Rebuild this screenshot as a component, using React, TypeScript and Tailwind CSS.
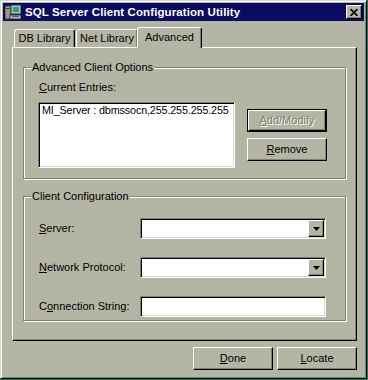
const raised =
  "border border-t-white border-l-white border-r-black border-b-black shadow-[inset_-1px_-1px_0_#808074]"
const sunken =
  "border border-t-[#808074] border-l-[#808074] border-r-white border-b-white shadow-[inset_1px_1px_0_#000,inset_-1px_-1px_0_#d8d8cc]"

const U = ({ children }: { children: string }) => <span className="underline underline-offset-[1px]">{children}</span>

const ArrowDown = () => (
  <svg width="7" height="4" viewBox="0 0 7 4">
    <polygon points="0,0 7,0 3.5,4" fill="#000" />
  </svg>
)

const Combo = () => (
  <div className={`${sunken} bg-white w-[186px] h-[21px] p-[1px] flex justify-end`}>
    <div className={`${raised} bg-[#b5b5a6] w-[16px] h-[17px] flex items-center justify-center`}>
      <ArrowDown />
    </div>
  </div>
)

const GroupBox = ({ title, className, children }: { title: string; className: string; children: any }) => (
  <div className={`relative border border-[#808074] shadow-[inset_1px_1px_0_#fff,1px_1px_0_#fff] ${className}`}>
    <span className="absolute -top-[7px] left-[7px] px-[1px] bg-[#b5b5a6]">{title}</span>
    {children}
  </div>
)

export default function App() {
  return (
    <div className="w-[368px] h-[380px] bg-[#0e7a6c] font-['Liberation_Sans',Arial,sans-serif] text-[11px] leading-[13px] text-black">
      <div className="w-[367px] h-[379px] bg-[#b5b5a6] border border-t-[#d8d8cc] border-l-[#d8d8cc] border-r-black border-b-black shadow-[inset_1px_1px_0_#fff,inset_-1px_-1px_0_#808074] p-[2px] flex flex-col">
        {/* title bar */}
        <div className="h-[18px] bg-[#0a0a60] flex items-center px-[2px]">
          <svg width="16" height="16" viewBox="0 0 16 16">
            <rect x="0" y="2" width="6" height="13" fill="#9a9a8c" stroke="#404040" strokeWidth="1" />
            <rect x="1" y="4" width="4" height="1" fill="#404040" />
            <rect x="6" y="1" width="10" height="9" fill="#c0c0b4" stroke="#303030" strokeWidth="1" />
            <rect x="8" y="3" width="6" height="5" fill="#18a890" />
            <rect x="5" y="11" width="11" height="4" fill="#c0c0b4" stroke="#303030" strokeWidth="1" />
            <rect x="7" y="12" width="7" height="1" fill="#5050a0" />
          </svg>
          <span className="ml-[4px] text-white font-bold text-[11.5px] tracking-[0.1px]">SQL Server Client Configuration Utility</span>
          <div className={`ml-auto ${raised} bg-[#b5b5a6] w-[16px] h-[14px] flex items-center justify-center`}>
            <svg width="8" height="7" viewBox="0 0 8 7">
              <path d="M0.5 0 L7.5 7 M7.5 0 L0.5 7" stroke="#000" strokeWidth="1.7" />
            </svg>
          </div>
        </div>

        <div className="pl-[9px] pt-[6px]">
          {/* tabs */}
          <div className="flex items-end h-[20px] pl-[2px]">
            <div className="w-[61px] h-[18px] border-t border-l border-white border-r border-r-black rounded-t-[3px] shadow-[inset_-1px_0_0_#808074] flex items-center justify-center">
              DB Library
            </div>
            <div className="ml-[1px] w-[62px] h-[18px] border-t border-l border-white border-r border-r-black rounded-t-[3px] shadow-[inset_-1px_0_0_#808074] flex items-center justify-center">
              Net Library
            </div>
            <div className="relative z-10 -ml-[1px] -mb-[1px] w-[65px] h-[21px] bg-[#b5b5a6] border-t border-l border-white border-r border-r-black rounded-t-[3px] shadow-[inset_-1px_0_0_#808074] flex justify-center pt-[3px]">
              Advanced
            </div>
          </div>

          {/* panel */}
          <div className={`w-[345px] h-[294px] ${raised} px-[10px] pt-[19px]`}>
            <GroupBox title="Advanced Client Options" className="w-[323px] h-[112px]">
              <div className="flex pl-[14px] pt-[13px]">
                <div className="flex flex-col">
                  <div className="pl-[1px]">
                    <U>C</U>urrent Entries:
                  </div>
                  <div className={`${sunken} bg-white w-[197px] h-[66px] mt-[8px] pl-[3px] pt-[1px] whitespace-nowrap overflow-hidden text-[10.8px] tracking-[-0.15px]`}>
                    MI_Server : dbmssocn,255.255.255.255
                  </div>
                </div>
                <div className="ml-[12px] flex flex-col">
                  <div className="mt-[28px] border border-black">
                    <div className={`${raised} w-[78px] h-[21px] flex items-center justify-center text-[#808074] [text-shadow:1px_1px_0_#fff]`}>
                      <U>A</U>dd/Modify
                    </div>
                  </div>
                  <div className={`mt-[6px] ${raised} w-[80px] h-[23px] flex items-center justify-center`}>
                    <U>R</U>emove
                  </div>
                </div>
              </div>
            </GroupBox>

            <GroupBox title="Client Configuration" className="mt-[17px] w-[323px] h-[125px]">
              <div className="flex flex-col gap-[18px] pl-[15px] pt-[21px]">
                <div className="flex items-center h-[21px]">
                  <div className="w-[101px]">
                    <U>S</U>erver:
                  </div>
                  <Combo />
                </div>
                <div className="flex items-center h-[21px]">
                  <div className="w-[101px]">
                    <U>N</U>etwork Protocol:
                  </div>
                  <Combo />
                </div>
                <div className="flex items-center h-[21px]">
                  <div className="w-[101px]">
                    C<U>o</U>nnection String:
                  </div>
                  <div className={`${sunken} bg-white w-[186px] h-[21px]`}></div>
                </div>
              </div>
            </GroupBox>
          </div>

          {/* bottom buttons */}
          <div className="w-[345px] flex justify-end gap-[4px] mt-[6px]">
            <div className={`${raised} w-[80px] h-[23px] flex items-center justify-center`}>
              <U>D</U>one
            </div>
            <div className={`${raised} w-[80px] h-[23px] flex items-center justify-center`}>
              <U>L</U>ocate
            </div>
          </div>
        </div>
      </div>
    </div>
  )
}
